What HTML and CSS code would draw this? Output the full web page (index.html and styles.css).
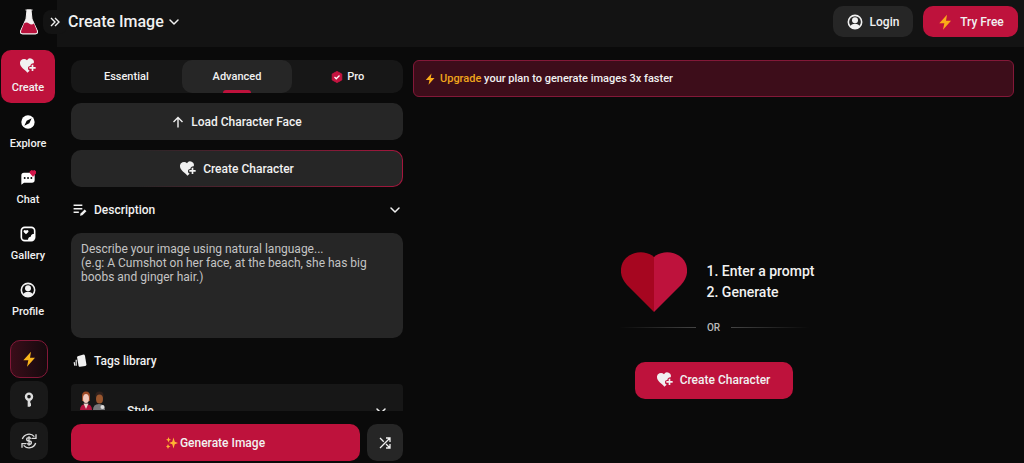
FILE: index.html
```html
<!DOCTYPE html>
<html lang="en">
<head>
  <meta charset="UTF-8">
  <meta name="viewport" content="width=device-width, initial-scale=1.0">
  <title>Create Image</title>
  <link rel="stylesheet" href="styles.css">
</head>
<body>

<!-- Shared icons -->
<svg class="sprite" aria-hidden="true">
  <symbol id="heart-plus" viewBox="0 0 24 24">
    <path fill="currentColor" d="M11 22C8 18 0 14 0 8a6 6 0 0 1 10.500-4.500A5.500 5.500 0 0 1 20.500 8c-3 0-5 2-5 4-2 0-3.500 1-3.500 3.500s1.500 3 2.500 3.500z"/>
    <path fill="currentColor" d="M17.500 10H20v3.500h3.500V16H20v3.500h-2.500V16H14v-2.500h3.500z"/>
  </symbol>
  <symbol id="bolt" viewBox="0 0 24 24">
    <path fill="currentColor" d="M15 1 3.500 14H11l-2 9.500L21 10h-7.500z"/>
  </symbol>
  <symbol id="user" viewBox="0 0 24 24">
    <circle cx="12" cy="12" r="10" fill="none" stroke="currentColor" stroke-width="2.400"/>
    <circle cx="12" cy="9.500" r="4.500" fill="currentColor"/>
    <path fill="currentColor" d="M4.500 19c1-3 4-4.500 7.500-4.500s6.500 1.500 7.500 4.500c-2 2-4.500 3-7.500 3s-5.500-1-7.500-3z"/>
  </symbol>
  <symbol id="chevron" viewBox="0 0 24 24">
    <path fill="none" stroke="currentColor" stroke-width="3" stroke-linecap="round" stroke-linejoin="round" d="m4 8 8 8 8-8"/>
  </symbol>
</svg>

<div class="app">
  <aside class="sidebar">
    <a class="logo" href="#" aria-label="Home">
      <svg width="20" height="26" viewBox="0 0 20 26">
        <path d="M6.500 1h7M8 1 7 10 1.500 22q-.8 3 2 3h13q2.800 0 2-3L13 10 12 1z" fill="#f3f1f1" stroke="#f3f1f1" stroke-linejoin="round"/>
        <path d="M5 14.500q2.500-2 5 0t5 0l3 7.800q.5 2-1.500 2h-13q-2 0-1.500-2z" fill="#b8123c"/>
      </svg>
    </a>
    <button class="expand" type="button" aria-label="Expand menu">
      <svg width="10" height="10" viewBox="0 0 10 10"><path d="m1 1 4 4-4 4M5 1l4 4-4 4" fill="none" stroke="currentColor" stroke-width="1.400"/></svg>
    </button>

    <nav class="nav">
      <a class="nav-item active" href="#">
        <svg class="icon"><use href="#heart-plus"/></svg>
        <span>Create</span>
      </a>
      <a class="nav-item" href="#">
        <svg class="icon" viewBox="0 0 24 24"><circle cx="12" cy="12" r="10" fill="#fff"/><path d="m17.500 6.500-3.500 7.500-7.500 3.500L10 10z" fill="#0a0a0a"/></svg>
        <span>Explore</span>
      </a>
      <a class="nav-item" href="#">
        <svg class="icon" viewBox="0 0 24 24">
          <path d="M2 22V8a4 4 0 0 1 4-4h11a5 5 0 0 1 5 5v6a4 4 0 0 1-4 4H6z" fill="#fff"/>
          <path d="M7 12h.1M12 12h.1M17 12h.1" stroke="#0a0a0a" stroke-width="2.800" stroke-linecap="round"/>
          <path d="M19.500 9.500 15.500 5a2.500 2.500 0 0 1 4-3 2.500 2.500 0 0 1 4 3z" fill="#d3164a" stroke="#d3164a" stroke-width="1.500"/>
        </svg>
        <span>Chat</span>
      </a>
      <a class="nav-item" href="#">
        <svg class="icon" viewBox="0 0 24 24">
          <rect x="2" y="2" width="20" height="20" rx="5" fill="none" stroke="#fff" stroke-width="2.400"/>
          <path d="M9 12.500 5.500 9a2 2 0 0 1 3.500-2 2 2 0 0 1 3.500 2z" fill="#fff"/>
          <path d="M12 21c0-4 2-4.500 4-5 1-3.500 2-4 5.500-4V18q0 3.500-3.500 3.500z" fill="#fff"/>
        </svg>
        <span>Gallery</span>
      </a>
      <a class="nav-item" href="#">
        <svg class="icon"><use href="#user"/></svg>
        <span>Profile</span>
      </a>
    </nav>

    <div class="tools">
      <button class="tool premium" type="button" aria-label="Upgrade"><svg class="icon"><use href="#bolt"/></svg></button>
      <button class="tool" type="button" aria-label="Key">
        <svg class="icon" viewBox="0 0 24 24"><circle cx="12" cy="7" r="4.500" fill="none" stroke="currentColor" stroke-width="3.600"/><path d="M12 12v10M12 19h3" fill="none" stroke="currentColor" stroke-width="4"/></svg>
      </button>
      <button class="tool" type="button" aria-label="Affiliate">
        <svg class="icon" viewBox="0 0 24 24" fill="none" stroke="currentColor" stroke-width="2">
          <path d="M2 9a10.500 10.500 0 0 1 18-3.500M22 15a10.500 10.500 0 0 1-18 3.500M22.500 2v6h-6M1.500 22v-6h6"/>
          <path d="M15.500 9q-1-2-3.500-2-3.500 0-3.500 2.500T12 12t3.500 2.500T12 17q-2.500 0-3.500-2M12 5v14"/>
        </svg>
      </button>
    </div>
  </aside>

  <div class="main">
    <header class="header">
      <button class="title" type="button">Create Image <svg class="icon-sm"><use href="#chevron"/></svg></button>
      <div class="header-actions">
        <button class="btn login" type="button"><svg class="icon"><use href="#user"/></svg>Login</button>
        <button class="btn primary try" type="button"><svg class="icon gold"><use href="#bolt"/></svg>Try Free</button>
      </div>
    </header>

    <div class="content">
      <section class="panel">
        <div class="panel-scroll">
          <div class="tabs" role="tablist">
            <button class="tab" type="button" role="tab">Essential</button>
            <button class="tab selected" type="button" role="tab" aria-selected="true">Advanced</button>
            <button class="tab" type="button" role="tab">
              <svg width="12" height="12" viewBox="0 0 24 24"><path d="m12 1 9.500 5v12L12 23l-9.500-5V6z" fill="#c41440" stroke="#c41440" stroke-width="2" stroke-linejoin="round"/><path d="m7 12 3.500 3.500L17 9" fill="none" stroke="#fff" stroke-width="2.500"/></svg>
              Pro
            </button>
          </div>

          <button class="btn wide" type="button">
            <svg class="icon-sm" viewBox="0 0 24 24"><path d="M12 23V3M3 12l9-9 9 9" fill="none" stroke="currentColor" stroke-width="2.800"/></svg>
            Load Character Face
          </button>
          <button class="btn wide glow" type="button"><svg class="icon"><use href="#heart-plus"/></svg>Create Character</button>

          <label class="section-title" for="description">
            <svg width="14" height="14" viewBox="0 0 24 24"><path d="M1 4h15M1 10h15M1 16h9" stroke="currentColor" stroke-width="2.600"/><path d="m12 22 1-4 7-7 3 3-7 7z" fill="currentColor"/></svg>
            Description
            <svg class="icon-sm toggle"><use href="#chevron"/></svg>
          </label>
          <textarea id="description" placeholder="Describe your image using natural language...
(e.g: A Cumshot on her face, at the beach, she has big boobs and ginger hair.)"></textarea>

          <h2 class="section-title">
            <svg width="14" height="14" viewBox="0 0 24 24"><path d="m8 4 10-3q2 0 2.500 2L23 18q0 2-2 2.500L12 22q-2 0-2.500-2L7 6q0-1.500 1-2z" fill="currentColor"/><path d="M5.500 10v10M2 14l1 6" stroke="currentColor" stroke-width="2"/></svg>
            Tags library
          </h2>
          <button class="tag-card" type="button">
            <svg class="people" width="28" height="20" viewBox="0 0 28 20">
              <path d="M1 19q0-6 6-6t6 6z" fill="#b51540"/>
              <path d="M4.500 12.500 7 18l2.500-5.500z" fill="#eed3ce"/>
              <path d="M3 10V5q0-4.500 4-4.500T11 5v5z" fill="#9c4a26"/>
              <ellipse cx="7" cy="7.500" rx="3" ry="4.500" fill="#f0c9bd"/>
              <path d="M14 19q0-6 6-6t6 6z" fill="#77777a"/>
              <circle cx="20.500" cy="4.500" r="4" fill="#30211d"/>
              <ellipse cx="20.500" cy="8" rx="3.500" ry="4.500" fill="#99562e"/>
              <circle cx="23.500" cy="16" r="2" fill="#ddd"/>
            </svg>
            <span>Style</span>
            <svg class="icon-sm toggle"><use href="#chevron"/></svg>
          </button>
        </div>

        <div class="panel-footer">
          <button class="btn primary generate" type="button">
            <svg width="12" height="12" viewBox="0 0 24 24" fill="#ffb534"><path d="m15 1 2.500 8.500L24 12l-6.500 2.500L15 23l-2.500-8.500L6 12l6.500-2.500zM5 0l1.500 4L10 5.500 6.500 7 5 11 3.500 7 0 5.500 3.500 4zM4 14l1.500 3.500L9 19l-3.500 1.500L4 24l-1.500-3.500L0 19l2.500-1.500z"/></svg>
            Generate Image
          </button>
          <button class="btn shuffle" type="button" aria-label="Random prompt">
            <svg width="12" height="12" viewBox="0 0 24 24"><path d="M2 2l7.500 7.500M2 22 21 3M14 2h8v8M14 14l7 7M22 14v8h-8" fill="none" stroke="currentColor" stroke-width="2.600"/></svg>
          </button>
        </div>
      </section>

      <section class="result">
        <p class="banner"><svg class="icon-sm gold"><use href="#bolt"/></svg><span><a href="#">Upgrade</a> your plan to generate images 3x faster</span></p>

        <div class="empty">
          <div class="intro">
            <svg width="66" height="60" viewBox="0 0 66 60">
              <path d="M33 60 6 33C-2 25-2 13 5 6S25-2 33 5z" fill="#a60620"/>
              <path d="m33 60 27-27c8-8 8-20 1-27S41-2 33 5z" fill="#be123c"/>
            </svg>
            <ol>
              <li>Enter a prompt</li>
              <li>Generate</li>
            </ol>
          </div>
          <div class="divider">OR</div>
          <button class="btn primary create" type="button"><svg class="icon"><use href="#heart-plus"/></svg>Create Character</button>
        </div>
      </section>
    </div>
  </div>
</div>

</body>
</html>
```

FILE: styles.css
```css
* {
  box-sizing: border-box;
}
body {
  margin: 0;
  background-color: #0a0a0a;
  color: #f1f1f1;
  font-family: Roboto, "Liberation Sans", sans-serif;
  font-size: 12px;
  font-weight: 500;
}
button,
textarea {
  font: inherit;
  color: inherit;
  border: 0;
  margin: 0;
}
button {
  padding: 0;
  cursor: pointer;
}
a {
  color: inherit;
  text-decoration: none;
}
.sprite {
  display: none;
}
.icon {
  width: 16px;
  height: 16px;
}
.icon-sm {
  width: 12px;
  height: 12px;
}
svg {
  flex-shrink: 0;
}
.gold {
  color: #fbab18;
}

.app {
  display: flex;
  height: 100vh;
}

/* Sidebar */
.sidebar {
  position: relative;
  display: flex;
  flex-direction: column;
  width: 57px;
  padding-bottom: 3px;
}
.logo {
  display: flex;
  justify-content: center;
  height: 50px;
  padding-top: 9px;
}
.expand {
  position: absolute;
  top: 10px;
  left: 43px;
  display: flex;
  align-items: center;
  justify-content: center;
  width: 24px;
  height: 24px;
  border-radius: 8px;
  background-color: #131313;
}
.nav {
  display: flex;
  flex-direction: column;
  gap: 3px;
  padding: 0 2px 0 1px;
}
.nav-item {
  display: flex;
  flex-direction: column;
  align-items: center;
  gap: 6px;
  height: 53px;
  padding-top: 8px;
  border-radius: 10px;
  font-size: 11px;
  line-height: 16px;
}
.nav-item.active {
  background-color: #be123c;
}
.tools {
  display: flex;
  flex-direction: column;
  align-items: center;
  gap: 3px;
  margin-top: auto;
}
.tool {
  display: flex;
  align-items: center;
  justify-content: center;
  width: 38px;
  height: 38px;
  border-radius: 10px;
  background-color: #191919;
  color: #ddd;
}
.tool.premium {
  border: 1px solid #831838;
  background: linear-gradient(to right, #3a0d19, #140a0d);
  color: #fbb51c;
}

/* Header */
.main {
  display: flex;
  flex: 1;
  flex-direction: column;
  min-width: 0;
}
.header {
  display: flex;
  align-items: center;
  justify-content: space-between;
  height: 47px;
  padding: 0 6px 4px 11px;
  background-color: #131313;
}
.title {
  display: flex;
  align-items: center;
  gap: 4px;
  background: none;
  font-size: 16px;
}
.header-actions {
  display: flex;
  gap: 10px;
}

/* Buttons */
.btn {
  display: flex;
  align-items: center;
  justify-content: center;
  gap: 7px;
  height: 37px;
  border-radius: 10px;
  background-color: #262626;
}
.btn.primary {
  background-color: #be123c;
}
.header-actions .btn {
  height: 31px;
}
.login {
  width: 80px;
}
.try {
  width: 95px;
}
.wide {
  width: 100%;
  margin-top: 10px;
}
.glow {
  border: 1px solid transparent;
  background: linear-gradient(#262626, #262626) padding-box,
    linear-gradient(to right, #262626 20%, #a5163d) border-box;
}

/* Left panel */
.content {
  display: flex;
  flex: 1;
  gap: 10px;
  min-height: 0;
  padding: 0 10px 0 14px;
}
.panel {
  display: flex;
  flex-direction: column;
  width: 332px;
}
.panel-scroll {
  flex: 1;
  min-height: 0;
  padding-top: 13px;
  overflow: hidden;
}
.tabs {
  display: grid;
  grid-template-columns: repeat(3, 1fr);
  height: 33px;
  border-radius: 10px;
  background-color: #171717;
}
.tab {
  position: relative;
  display: flex;
  align-items: center;
  justify-content: center;
  gap: 4px;
  border-radius: 10px;
  background: none;
  font-size: 11px;
}
.tab.selected {
  background-color: #262626;
}
.tab.selected::after {
  content: "";
  position: absolute;
  bottom: 0;
  width: 28px;
  height: 3px;
  border-radius: 3px 3px 0 0;
  background-color: #be123c;
}
.section-title {
  display: flex;
  align-items: center;
  gap: 7px;
  height: 46px;
  margin: 0;
  padding: 0 2px;
  font-size: 12px;
  font-weight: 500;
}
.toggle {
  margin-left: auto;
}
textarea {
  display: block;
  width: 100%;
  height: 105px;
  padding: 9px 10px;
  border-radius: 10px;
  background-color: #262626;
  font-weight: 400;
  line-height: 14px;
  resize: none;
}
textarea::placeholder {
  color: #c4c4c4;
}
.tag-card {
  display: flex;
  align-items: center;
  width: 100%;
  height: 54px;
  padding: 0 16px 0 8px;
  border-radius: 4px;
  background-color: #171717;
}
.people {
  align-self: flex-start;
  margin: 7px 20px 0 0;
}
.panel-footer {
  display: flex;
  gap: 7px;
  padding: 13px 0 2px;
}
.generate {
  flex: 1;
  gap: 2px;
}
.shuffle {
  width: 36px;
}

/* Result area */
.result {
  display: flex;
  flex: 1;
  flex-direction: column;
}
.banner {
  display: flex;
  align-items: center;
  gap: 4px;
  height: 37px;
  margin: 13px 0 0;
  padding: 0 10px;
  border: 1px solid #831838;
  border-radius: 6px;
  background-color: #3d0d1a;
  font-size: 11px;
}
.banner a {
  color: #f0a51c;
}
.empty {
  display: flex;
  flex: 1;
  flex-direction: column;
  align-items: center;
  justify-content: center;
  padding-top: 90px;
}
.intro {
  display: flex;
  align-items: center;
  gap: 20px;
  padding-left: 8px;
}
.intro ol {
  margin: 0;
  padding: 0;
  list-style-position: inside;
  font-size: 14px;
  line-height: 21px;
}
.divider {
  display: flex;
  align-items: center;
  gap: 11px;
  width: 190px;
  margin: 8px 0 26px;
  color: #bbb;
  font-size: 10px;
  line-height: 16px;
}
.divider::before,
.divider::after {
  content: "";
  flex: 1;
  height: 1px;
  background: linear-gradient(to right, transparent, #444);
}
.divider::after {
  background: linear-gradient(to left, transparent, #444);
}
.create {
  width: 158px;
}
```
